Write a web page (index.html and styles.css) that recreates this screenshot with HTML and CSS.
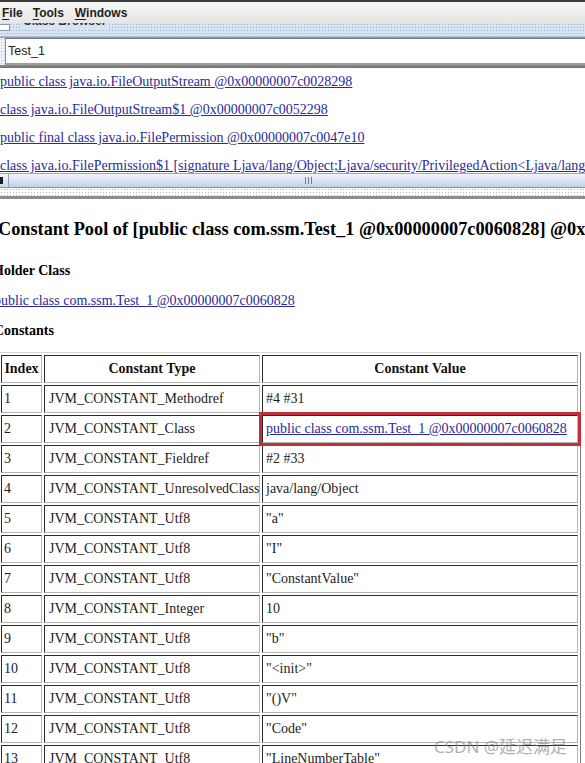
FILE: index.html
```html
<!DOCTYPE html>
<html>
<head>
<meta charset="utf-8">
<link rel="stylesheet" href="styles.css">
</head>
<body>
<div class="app">
  <div class="menubar">
    <span class="menu"><u>F</u>ile</span>
    <span class="menu"><u>T</u>ools</span>
    <span class="menu"><u>W</u>indows</span>
  </div>
  <div class="titlebar">
    <span class="ticon"></span>
    <span class="ttext">Class Browser</span>
  </div>
  <div class="fieldwrap">
    <div class="field">Test_1</div>
  </div>
  <div class="sep"></div>
  <div class="list">
    <div class="row"><a href="#">public class java.io.FileOutputStream @0x00000007c0028298</a></div>
    <div class="row"><a href="#">class java.io.FileOutputStream$1 @0x00000007c0052298</a></div>
    <div class="row"><a href="#">public final class java.io.FilePermission @0x00000007c0047e10</a></div>
    <div class="row"><a href="#">class java.io.FilePermission$1 [signature Ljava/lang/Object;Ljava/security/PrivilegedAction&lt;Ljava/lang/String;&gt;;]</a></div>
  </div>
  <div class="hscroll">
    <div class="sbtn"><span class="sarrow"></span></div>
    <div class="sthumb"><span class="grip"></span></div>
  </div>
  <div class="dots"></div>
  <div class="sep2"></div>
  <div class="content">
    <h1 class="title">Constant Pool of [public class com.ssm.Test_1 @0x00000007c0060828] @0x00000007c0060828</h1>
    <h2 class="sub">Holder Class</h2>
    <p class="plink"><a href="#">public class com.ssm.Test_1 @0x00000007c0060828</a></p>
    <h2 class="sub sub2">Constants</h2>
    <table class="pool">
      <colgroup>
        <col class="c1"><col class="c2"><col class="c3">
      </colgroup>
      <thead>
        <tr><th>Index</th><th>Constant Type</th><th>Constant Value</th></tr>
      </thead>
      <tbody>
        <tr><td>1</td><td>JVM_CONSTANT_Methodref</td><td>#4 #31</td></tr>
        <tr><td>2</td><td>JVM_CONSTANT_Class</td><td class="hl"><a href="#">public class com.ssm.Test_1 @0x00000007c0060828</a></td></tr>
        <tr><td>3</td><td>JVM_CONSTANT_Fieldref</td><td>#2 #33</td></tr>
        <tr><td>4</td><td>JVM_CONSTANT_UnresolvedClass</td><td>java/lang/Object</td></tr>
        <tr><td>5</td><td>JVM_CONSTANT_Utf8</td><td>"a"</td></tr>
        <tr><td>6</td><td>JVM_CONSTANT_Utf8</td><td>"I"</td></tr>
        <tr><td>7</td><td>JVM_CONSTANT_Utf8</td><td>"ConstantValue"</td></tr>
        <tr><td>8</td><td>JVM_CONSTANT_Integer</td><td>10</td></tr>
        <tr><td>9</td><td>JVM_CONSTANT_Utf8</td><td>"b"</td></tr>
        <tr><td>10</td><td>JVM_CONSTANT_Utf8</td><td>"&lt;init&gt;"</td></tr>
        <tr><td>11</td><td>JVM_CONSTANT_Utf8</td><td>"()V"</td></tr>
        <tr><td>12</td><td>JVM_CONSTANT_Utf8</td><td>"Code"</td></tr>
        <tr><td>13</td><td>JVM_CONSTANT_Utf8</td><td>"LineNumberTable"</td></tr>
        <tr><td>14</td><td>JVM_CONSTANT_Utf8</td><td>"LocalVariableTable"</td></tr>
      </tbody>
    </table>
  </div>
  <div class="watermark">CSDN @延迟满足</div>
</div>
</body>
</html>
```

FILE: styles.css
```css
html, body {
  margin: 0;
  padding: 0;
  background: #ffffff;
}
body {
  width: 585px;
  height: 763px;
  overflow: hidden;
}
.app {
  position: relative;
  width: 585px;
  height: 763px;
  overflow: hidden;
}
.menubar {
  height: 21px;
  border-top: 2px solid #3e3e3e;
  background: linear-gradient(#f6f6f4, #e6e7e4);
  display: flex;
  align-items: center;
  font-family: "Liberation Sans", Arial, sans-serif;
  font-weight: bold;
  font-size: 12px;
  color: #1e1e1e;
  padding-left: 2px;
}
.menu {
  margin-right: 10px;
  line-height: 20px;
}
.menu:nth-child(2) {
  margin-right: 11px;
}
.menu u {
  text-decoration-thickness: 1px;
  text-underline-offset: 2px;
}
.titlebar {
  height: 14px;
  overflow: hidden;
  display: flex;
  align-items: flex-start;
  background-color: #d7e3f2;
  background-image: radial-gradient(circle, #9db3d2 0.7px, transparent 1px);
  background-size: 3px 3px;
  border-bottom: 1px solid #a9c0dd;
  box-sizing: border-box;
}
.ticon {
  width: 9px;
  height: 5px;
  margin-top: 1px;
  background: #ffffff;
  border: 1px solid #8a9ab0;
  border-left: none;
  flex: none;
}
.ttext {
  font-family: "Liberation Sans", Arial, sans-serif;
  font-weight: bold;
  font-size: 12px;
  color: #333;
  margin-left: 10px;
  line-height: 14px;
  margin-top: -9px;
  background: #d7e3f2;
  padding: 0 3px;
}
.fieldwrap {
  height: 28px;
  padding-left: 5px;
  background-color: #eef1f5;
  background-image: radial-gradient(circle, #b8c2ce 0.6px, transparent 0.9px);
  background-size: 3px 3px;
  display: flex;
  align-items: stretch;
  box-sizing: border-box;
  border-top: 1px solid #9a9a9a;
}
.field {
  flex: 1;
  background: #ffffff;
  border-top: 1px solid #777;
  border-left: 1px solid #8c8c8c;
  border-bottom: 2px solid #9c9c9c;
  font-family: "Liberation Sans", Arial, sans-serif;
  font-size: 12.5px;
  color: #222;
  padding-left: 2px;
  display: flex;
  align-items: center;
}
.sep {
  height: 3px;
  background: linear-gradient(#8e8e8e, #6f6f6f);
}
.list {
  height: 105px;
  overflow: hidden;
  background: #ffffff;
  font-family: "Liberation Serif", "Times New Roman", serif;
  font-size: 14px;
}
.row {
  height: 28px;
  line-height: 28px;
  white-space: nowrap;
}
a {
  color: #2a2a9c;
  text-decoration: underline;
}
.hscroll {
  height: 15px;
  display: flex;
  box-sizing: border-box;
  border-top: 1px solid #9aa8bb;
  border-bottom: 1px solid #8395ae;
}
.sbtn {
  width: 8px;
  flex: none;
  background: linear-gradient(#f4f7fb, #cdd9ea);
  border-right: 1px solid #8fa2be;
  display: flex;
  align-items: center;
}
.sarrow {
  width: 3px;
  height: 7px;
  background: #202020;
}
.sthumb {
  flex: 1;
  background: linear-gradient(#f1f5fb 0%, #dbe5f3 50%, #bfd0e8 100%);
  display: flex;
  align-items: center;
  justify-content: flex-start;
}
.grip {
  margin-left: 296px;
  width: 7px;
  height: 7px;
  background: repeating-linear-gradient(90deg, #6d7f99 0 1px, transparent 1px 3px);
}
.dots {
  height: 8px;
  background-color: #ffffff;
  background-image: radial-gradient(circle, #b6b6b6 0.6px, transparent 0.9px);
  background-size: 3px 3px;
}
.sep2 {
  height: 3px;
  background: #8d8d8d;
}
.content {
  font-family: "Liberation Serif", "Times New Roman", serif;
  color: #000;
  white-space: nowrap;
}
.title {
  margin: 19px 0 0 -2px;
  font-size: 18.3px;
  line-height: 22px;
  font-weight: bold;
}
.sub {
  margin: 21px 0 0 -7px;
  font-size: 14px;
  line-height: 20px;
  font-weight: bold;
}
.sub2 {
  margin-top: 10px;
  margin-left: -6px;
}
.plink {
  margin: 10px 0 0 -6px;
  font-size: 14px;
  line-height: 20px;
}
.pool {
  margin: 11px 0 0 -2px;
  width: 583px;
  border-collapse: separate;
  border-spacing: 2px;
  border: 1px solid;
  border-color: #d4d4d4 #7a7a7a #7a7a7a #d4d4d4;
  table-layout: fixed;
  font-size: 14px;
  color: #1c1c1c;
}
.c1 { width: 41px; }
.c2 { width: 216px; }
.c3 { width: 316px; }
.pool th, .pool td {
  box-sizing: border-box;
  height: 28px;
  padding: 0 3px;
  border: 1px solid;
  border-color: #2a2a2a #b4b4b4 #b4b4b4 #2a2a2a;
  text-align: left;
  vertical-align: middle;
  white-space: nowrap;
  overflow: hidden;
}
.pool th {
  text-align: center;
  font-weight: bold;
  color: #111;
  padding: 0;
}
.pool td:first-child {
  padding-left: 2px;
}
.pool td:nth-child(2) {
  padding-left: 4px;
}
.pool td.hl {
  outline: 3px solid #c0303c;
  outline-offset: 0;
  overflow: visible;
}
.watermark {
  position: absolute;
  left: 434px;
  top: 733px;
  font-family: "Noto Sans", "Noto Sans CJK SC", sans-serif;
  font-size: 17px;
  color: rgba(140, 140, 140, 0.7);
  white-space: nowrap;
}
```
